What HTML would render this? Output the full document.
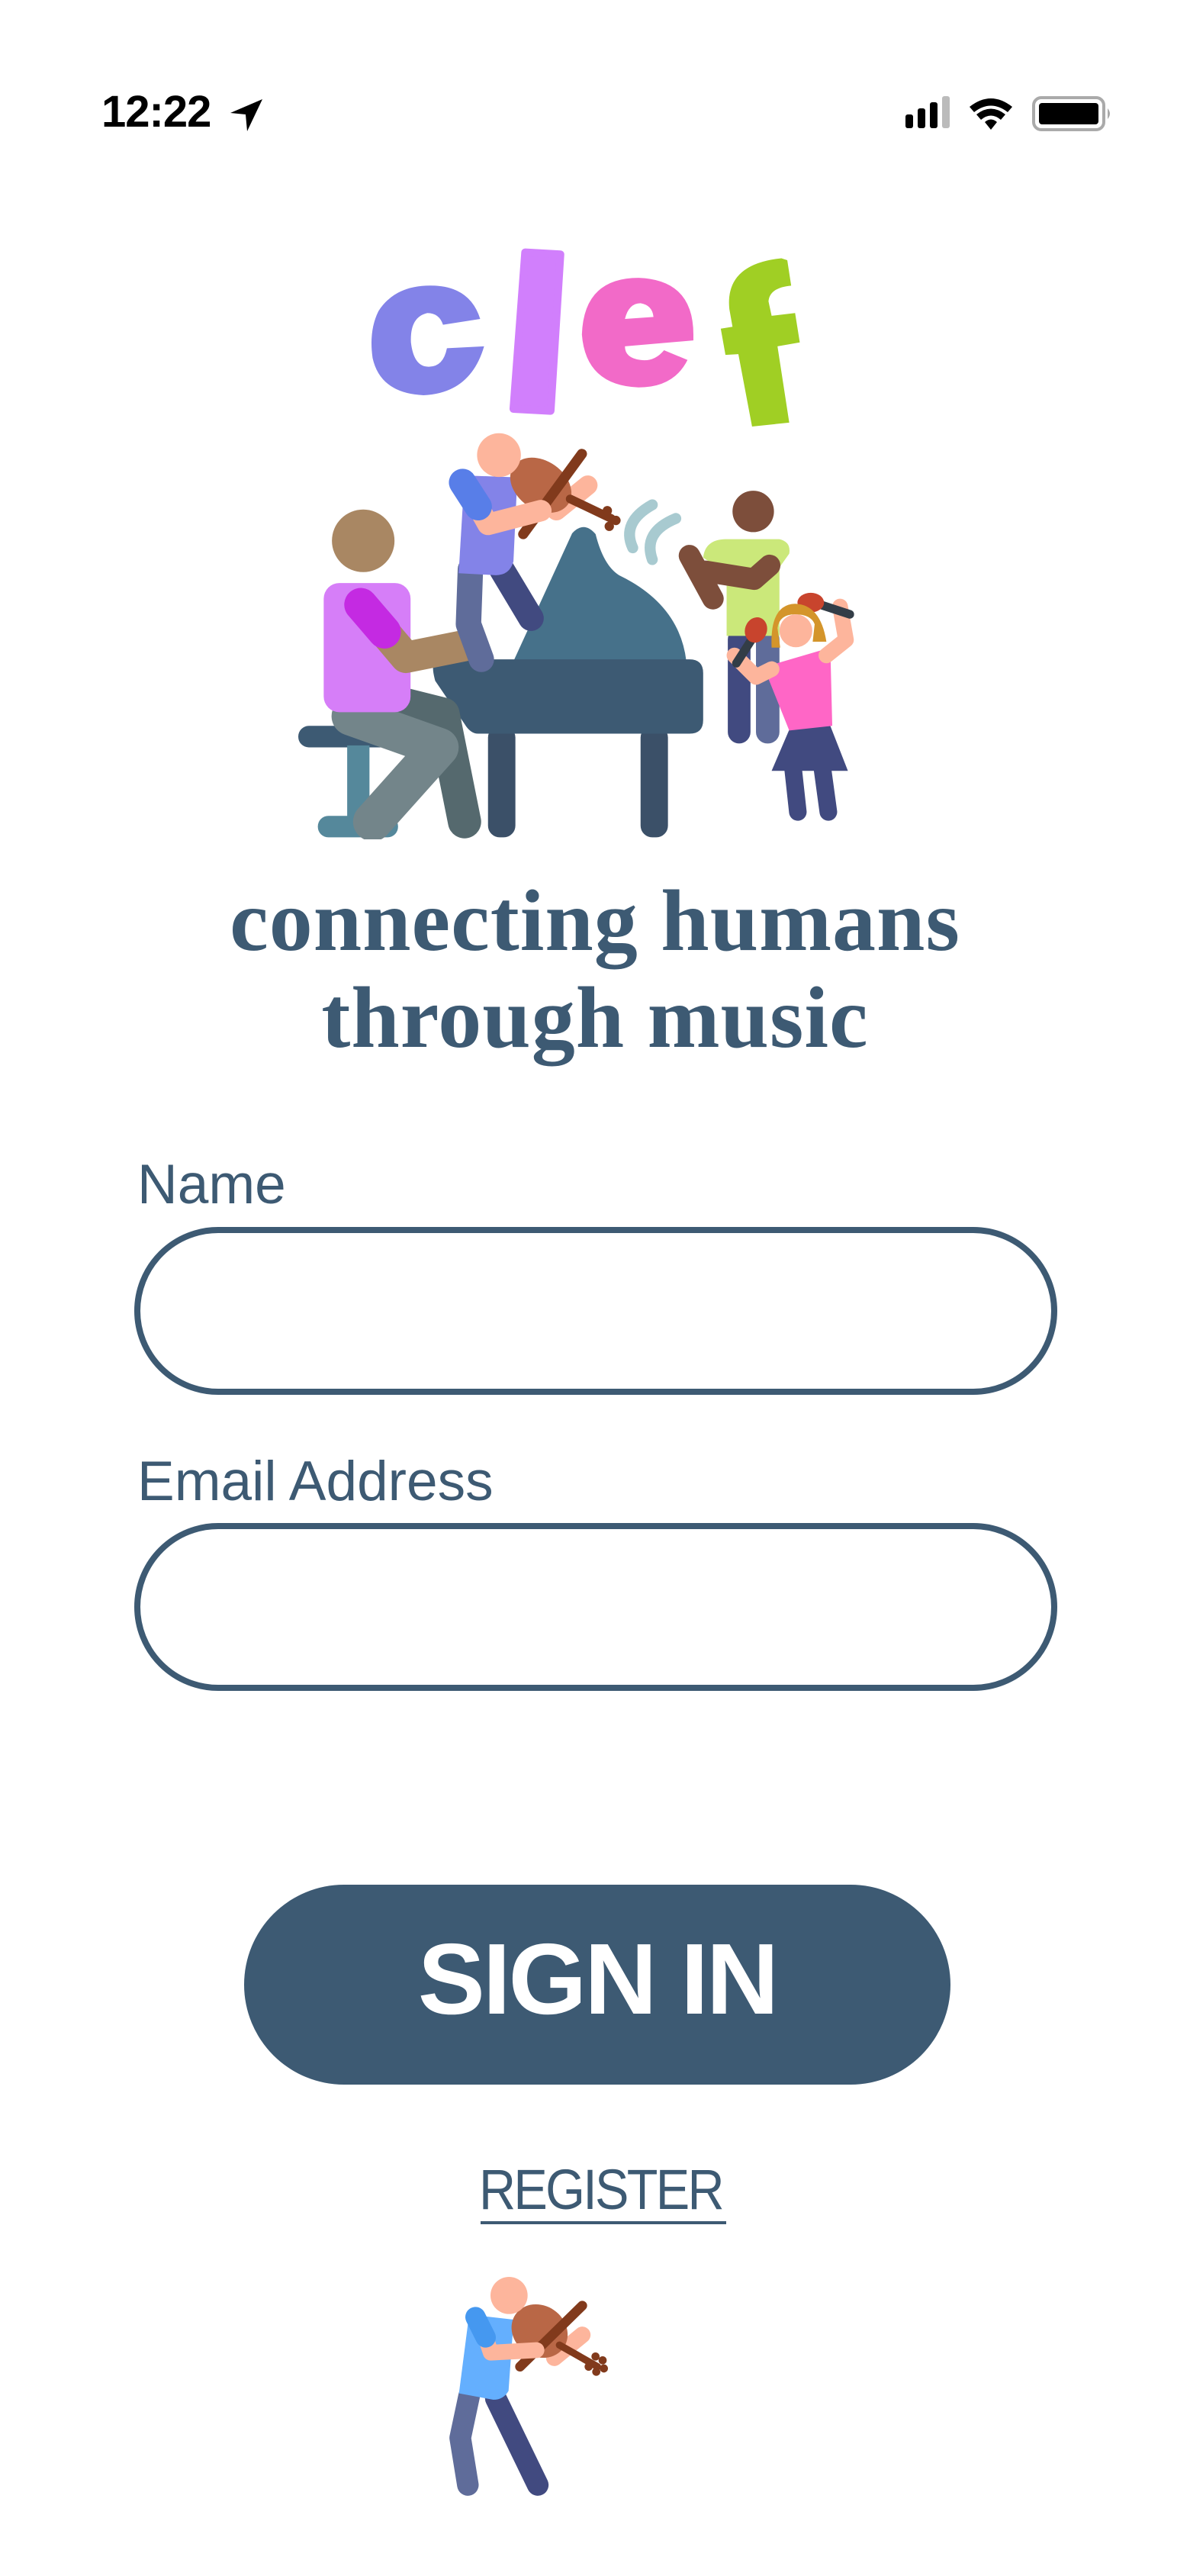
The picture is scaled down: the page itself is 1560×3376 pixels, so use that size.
<!DOCTYPE html>
<html><head><meta charset="utf-8">
<style>
html,body{margin:0;padding:0;background:#fff;}
body{width:1560px;height:3376px;position:relative;overflow:hidden;font-family:"Liberation Sans",sans-serif;}
.abs{position:absolute;}
.lbl{position:absolute;left:180px;color:#3d5a73;font-size:73px;line-height:1;}
.inp{position:absolute;left:176px;width:1210px;height:220px;box-sizing:border-box;border:8px solid #3d5a73;border-radius:110px;}
.tag{position:absolute;left:0;width:1560px;text-align:center;font-family:"Liberation Serif",serif;font-weight:bold;color:#3d5a73;font-size:114px;line-height:1;letter-spacing:1px;}
</style></head><body>
<div class="abs" style="left:133px;top:113px;font-size:58px;font-weight:bold;letter-spacing:-1px;">12:22</div>
<svg class="abs" style="left:300px;top:128px" width="46" height="46" viewBox="0 0 46 46"><path d="M44 2 L2 20 L22 22 L24 44 Z" fill="#000"/></svg>
<svg class="abs" style="left:1185px;top:126px" width="280" height="50" viewBox="0 0 280 50">
<rect x="2" y="24" width="10" height="18" rx="3" fill="#000"/>
<rect x="18" y="16" width="10" height="26" rx="3" fill="#000"/>
<rect x="34" y="8" width="10" height="34" rx="3" fill="#000"/>
<rect x="50" y="0" width="10" height="42" rx="3" fill="#bbb"/>
<path d="M86 14 Q114 -8 142 14 L136 21 Q114 4 92 21 Z" fill="#000"/>
<path d="M95 24 Q114 9 133 24 L127 31 Q114 20 101 31 Z" fill="#000"/>
<path d="M106 34 Q114 27 122 34 L114 44 Z" fill="#000"/>
<rect x="170" y="2" width="92" height="42" rx="10" fill="none" stroke="#aaa" stroke-width="4"/>
<rect x="177" y="9" width="78" height="28" rx="4" fill="#000"/>
<path d="M267 16 Q273 23 267 30 Z" fill="#aaa"/>
</svg>

<svg class="abs" style="left:350px;top:300px" width="800" height="800" viewBox="0 0 1560 1560">
<path d="M545 230 Q520 150 430 145 Q330 140 285 210 Q260 260 270 330 Q290 420 400 425 Q520 420 555 300 L460 305 Q450 355 410 352 Q375 350 368 290 Q365 225 410 215 Q440 215 450 245 Z" fill="#8383e8"/>
<path d="M660 60 L750 65 L725 465 L630 460 Z" fill="#d17ffc" stroke="#d17ffc" stroke-width="20" stroke-linejoin="round"/>
<path d="M1090 270 Q1090 130 950 125 Q810 125 805 270 Q815 400 950 405 Q1040 405 1075 335 L1015 310 Q990 340 955 335 Q915 330 915 300 L1090 285 Z M915 230 Q925 190 955 190 Q985 195 988 225 Z" fill="#f26ac8" fill-rule="evenodd"/>
<path d="M1330 80 L1340 145 Q1285 150 1282 185 L1290 222 L1350 215 L1362 290 L1305 300 L1335 495 L1240 505 L1205 320 L1172 322 L1160 255 L1190 250 L1182 205 Q1170 90 1315 75 Z" fill="#a0cf24"/>
<path d="M630 1105 L780 778 Q810 745 840 780 Q860 860 900 885 Q1055 960 1072 1105 Z" fill="#46718a"/>
<rect x="565" y="1270" width="70" height="285" rx="30" fill="#3b5068"/>
<rect x="955" y="1270" width="70" height="285" rx="30" fill="#3b5068"/>
<path d="M440 1100 L1080 1100 Q1115 1100 1115 1135 L1115 1255 Q1115 1290 1080 1290 L540 1290 Q520 1290 505 1265 L430 1155 Q415 1100 440 1100 Z" fill="#3d5a73"/>
<rect x="80" y="1270" width="260" height="55" rx="27" fill="#3d5a73"/>
<rect x="205" y="1320" width="57" height="190" fill="#55889b"/>
<rect x="130" y="1500" width="205" height="55" rx="27" fill="#55889b"/>
<path d="M330 1210 L450 1240 L505 1515" stroke="#55696e" stroke-width="85" fill="none" stroke-linecap="round" stroke-linejoin="round"/>
<path d="M215 1245 L440 1325 L270 1515" stroke="#73858a" stroke-width="100" fill="none" stroke-linecap="round" stroke-linejoin="round"/>
<rect x="145" y="905" width="222" height="330" rx="40" fill="#d67ef8"/>
<path d="M300 1030 L355 1095 L505 1065" stroke="#a98763" stroke-width="80" fill="none" stroke-linecap="round" stroke-linejoin="round"/>
<path d="M240 960 L300 1030" stroke="#c42ae2" stroke-width="85" stroke-linecap="round"/>
<circle cx="246" cy="797" r="80" fill="#a98763"/>
<path d="M520 870 L515 1010 L548 1100" stroke="#5f6c9a" stroke-width="65" fill="none" stroke-linecap="round" stroke-linejoin="round"/>
<path d="M600 870 L675 995" stroke="#414a80" stroke-width="65" stroke-linecap="round"/>
<path d="M505 630 L640 635 L630 850 Q620 885 585 885 L490 880 Z" fill="#8383e8"/>
<path d="M740 720 L820 655" stroke="#fdb59c" stroke-width="50" stroke-linecap="round"/>
<ellipse cx="700" cy="655" rx="85" ry="62" transform="rotate(35 700 655)" fill="#b96746"/>
<path d="M775 690 L880 740" stroke="#813a1c" stroke-width="22" stroke-linecap="round"/>
<circle cx="870" cy="720" r="12" fill="#813a1c"/><circle cx="892" cy="745" r="12" fill="#813a1c"/><circle cx="875" cy="760" r="12" fill="#813a1c"/>
<path d="M655 780 L805 575" stroke="#813a1c" stroke-width="26" stroke-linecap="round"/>
<path d="M540 710 L565 755 L700 720" stroke="#fdb59c" stroke-width="55" fill="none" stroke-linecap="round" stroke-linejoin="round"/>
<path d="M500 648 L540 710" stroke="#587ee8" stroke-width="70" stroke-linecap="round"/>
<circle cx="593" cy="578" r="56" fill="#fdb59c"/>
<path d="M935 815 Q905 750 985 705" stroke="#a8cad0" stroke-width="28" fill="none" stroke-linecap="round"/>
<path d="M985 845 Q960 775 1045 740" stroke="#a8cad0" stroke-width="28" fill="none" stroke-linecap="round"/>
<rect x="1178" y="1020" width="58" height="295" rx="29" fill="#414a80"/>
<rect x="1250" y="1020" width="60" height="295" rx="29" fill="#5f6c9a"/>
<path d="M1115 840 Q1120 795 1170 793 L1310 793 Q1340 800 1335 830 L1310 865 L1310 1040 L1175 1040 L1175 880 Z" fill="#cbe87a"/>
<path d="M1080 835 L1140 945 M1120 875 L1245 895 L1285 860" stroke="#7d4e3b" stroke-width="55" fill="none" stroke-linecap="round" stroke-linejoin="round"/>
<circle cx="1243" cy="722" r="53" fill="#7d4e3b"/>
<path d="M1345 1380 L1357 1490 M1420 1380 L1435 1490" stroke="#414a80" stroke-width="45" stroke-linecap="round"/>
<path d="M1335 1280 L1440 1270 L1485 1385 L1290 1385 Z" fill="#414a80"/>
<path d="M1270 1120 L1440 1070 L1445 1270 L1335 1282 Z" fill="#ff66c6"/>
<path d="M1195 1090 L1250 1145 L1290 1125 M1430 1090 L1480 1050 L1465 965" stroke="#fdb59c" stroke-width="40" fill="none" stroke-linecap="round" stroke-linejoin="round"/>
<path d="M1420 962 L1490 985" stroke="#333d47" stroke-width="22" stroke-linecap="round"/>
<ellipse cx="1390" cy="955" rx="34" ry="25" fill="#c8442d"/>
<path d="M1200 1110 L1245 1040" stroke="#333d47" stroke-width="22" stroke-linecap="round"/>
<ellipse cx="1250" cy="1025" rx="28" ry="33" transform="rotate(20 1250 1025)" fill="#c8442d"/>
<path d="M1290 1070 Q1285 960 1350 958 Q1415 960 1430 1055 L1395 1055 L1400 1010 Q1390 985 1350 985 Q1310 985 1305 1020 L1312 1070 Z" fill="#d4952b"/>
<circle cx="1352" cy="1027" r="42" fill="#fdb59c"/>
</svg>

<div class="tag" style="top:1150px">connecting humans</div>
<div class="tag" style="top:1277px">through music</div>

<div class="lbl" style="top:1516px">Name</div>
<div class="inp" style="top:1608px"></div>
<div class="lbl" style="top:1905px">Email Address</div>
<div class="inp" style="top:1996px"></div>

<div class="abs" style="left:320px;top:2470px;width:926px;height:262px;border-radius:131px;background:#3d5a73;"></div>
<div class="abs" style="left:320px;top:2528px;width:926px;text-align:center;color:#fff;font-weight:bold;font-size:132px;line-height:1;letter-spacing:-3px;">SIGN IN</div>

<div class="abs" style="left:628px;top:2833px;font-size:74px;line-height:1;letter-spacing:-3px;color:#3d5a73;white-space:nowrap;transform:scaleX(0.9);transform-origin:0 0;">REGISTER</div>
<div class="abs" style="left:630px;top:2911px;width:322px;height:4px;background:#3d5a73;"></div>

<svg class="abs" style="left:500px;top:2800px" width="500" height="500" viewBox="0 0 1500 1500">
<path d="M345 1020 L310 1185 L340 1370" stroke="#5f6c9a" stroke-width="85" fill="none" stroke-linecap="round" stroke-linejoin="round"/>
<path d="M450 1030 L615 1370" stroke="#414a80" stroke-width="85" stroke-linecap="round"/>
<path d="M345 700 L520 720 L500 1000 Q480 1035 440 1035 L305 1010 Z" fill="#64affe"/>
<path d="M680 870 L790 780" stroke="#fdb59c" stroke-width="65" stroke-linecap="round"/>
<ellipse cx="622" cy="765" rx="115" ry="100" transform="rotate(35 622 765)" fill="#b96746"/>
<path d="M700 820 L850 905" stroke="#813a1c" stroke-width="28" stroke-linecap="round"/>
<circle cx="842" cy="865" r="16" fill="#813a1c"/><circle cx="870" cy="880" r="16" fill="#813a1c"/><circle cx="875" cy="912" r="16" fill="#813a1c"/><circle cx="845" cy="925" r="16" fill="#813a1c"/><circle cx="815" cy="905" r="16" fill="#813a1c"/>
<path d="M545 905 L790 665" stroke="#813a1c" stroke-width="38" stroke-linecap="round"/>
<path d="M410 790 L430 850 L610 840" stroke="#fdb59c" stroke-width="62" fill="none" stroke-linecap="round" stroke-linejoin="round"/>
<path d="M370 710 L410 790" stroke="#4598f0" stroke-width="80" stroke-linecap="round"/>
<circle cx="502" cy="625" r="73" fill="#fdb59c"/>
</svg>
</body></html>
